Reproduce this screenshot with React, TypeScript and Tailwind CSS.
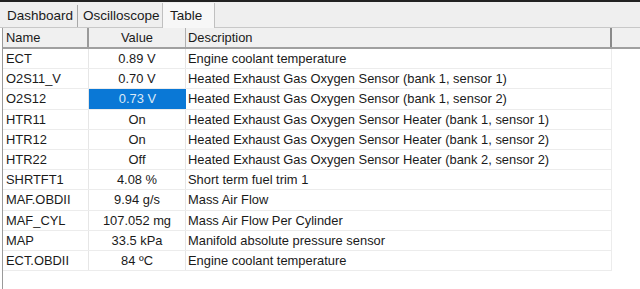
const rows: [string, string, string][] = [
  ['ECT', '0.89 V', 'Engine coolant temperature'],
  ['O2S11_V', '0.70 V', 'Heated Exhaust Gas Oxygen Sensor (bank 1, sensor 1)'],
  ['O2S12', '0.73 V', 'Heated Exhaust Gas Oxygen Sensor (bank 1, sensor 2)'],
  ['HTR11', 'On', 'Heated Exhaust Gas Oxygen Sensor Heater (bank 1, sensor 1)'],
  ['HTR12', 'On', 'Heated Exhaust Gas Oxygen Sensor Heater (bank 1, sensor 2)'],
  ['HTR22', 'Off', 'Heated Exhaust Gas Oxygen Sensor Heater (bank 2, sensor 2)'],
  ['SHRTFT1', '4.08 %', 'Short term fuel trim 1'],
  ['MAF.OBDII', '9.94 g/s', 'Mass Air Flow'],
  ['MAF_CYL', '107.052 mg', 'Mass Air Flow Per Cylinder'],
  ['MAP', '33.5 kPa', 'Manifold absolute pressure sensor'],
  ['ECT.OBDII', '84 ºC', 'Engine coolant temperature'],
]

export default function App() {
  return (
    <div className="flex h-[289px] w-[640px] flex-col overflow-hidden bg-white font-['Liberation_Sans',Arial,sans-serif] text-[12.9px] text-[#1a1a1a]">
      <div className="h-[2px] bg-[#222]" />
      <div className="flex h-[26px] items-end border-b border-[#c8c8c8] bg-[#efefef] pl-[2px] text-[13.5px]">
        <div className="flex h-[22px] w-[76px] items-center border-r border-[#a8a8a8] pl-[5px]">Dashboard</div>
        <div className="flex h-[22px] w-[84px] items-center pl-[5px]">Oscilloscope</div>
        <div className="mb-[-1px] flex h-[25px] w-[53px] items-start border-r border-l border-[#c0c0c0] bg-[#f7f7f7] pt-[3px] pl-[7px]">
          Table
        </div>
      </div>
      <div className="ml-[2px] flex flex-1 flex-col border-l border-[#9a9a9a]">
        <div className="flex h-[21px] border-b-2 border-[#a0a0a0] bg-[#f0f0f0]">
          <div className="w-[86px] border-r-2 border-[#9a9a9a] pl-[3px] leading-[20px]">Name</div>
          <div className="w-[97px] border-r border-[#b0b0b0] text-center leading-[20px]">Value</div>
          <div className="w-[426px] border-r-2 border-[#8a8a8a] pl-[2px] leading-[20px]">Description</div>
          <div className="flex-1" />
        </div>
        <div className="w-[609px]">
          {rows.map(([name, value, desc]) => {
            const sel = name === 'O2S12'
            return (
              <div key={name} className="flex h-[20.2px] border-b border-[#ececec]">
                <div className="w-[86px] border-r border-[#e6e6e6] pl-[3px] leading-[20px]">{name}</div>
                <div
                  className={
                    sel
                      ? 'w-[97px] bg-[#0a78d6] text-center leading-[20px] text-[#dbe9f7]'
                      : 'w-[97px] border-r border-[#e6e6e6] text-center leading-[20px]'
                  }
                >
                  {value}
                </div>
                <div className="flex-1 border-r border-[#ececec] pl-[2px] leading-[20px]">{desc}</div>
              </div>
            )
          })}
        </div>
      </div>
    </div>
  )
}
